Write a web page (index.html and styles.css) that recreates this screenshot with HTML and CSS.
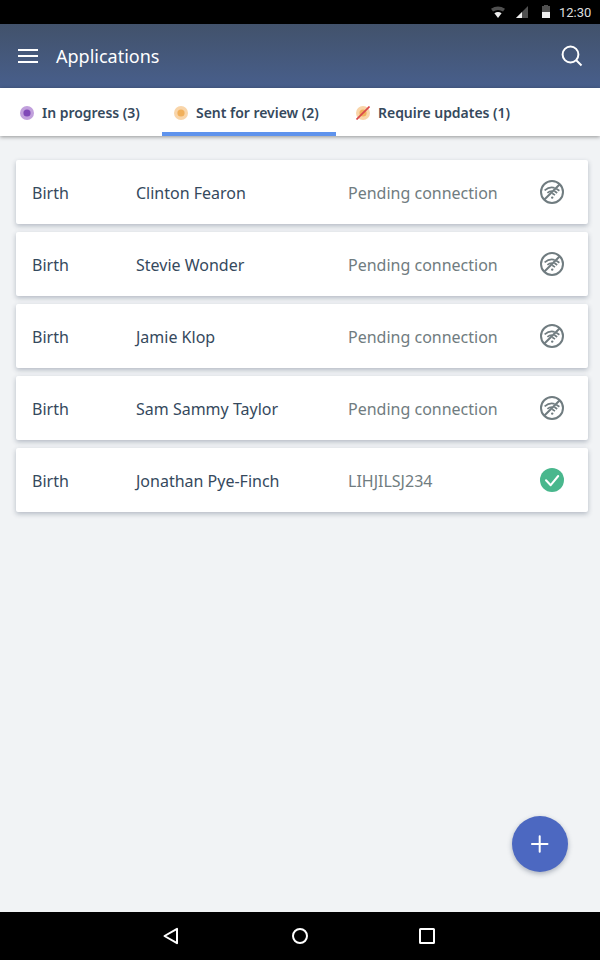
FILE: index.html
```html
<!DOCTYPE html>
<html lang="en">
<head>
<meta charset="utf-8">
<title>Applications</title>
<link rel="stylesheet" href="styles.css">
</head>
<body>
<svg width="0" height="0" class="defs">
  <symbol id="offline" viewBox="0 0 24 24">
    <g fill="none" stroke="#707c80" stroke-width="2">
      <circle cx="12" cy="12" r="11"/>
      <path d="M4.2 19.8L19.8 4.2"/>
    </g>
    <path d="M4.6 10.4Q9.6 6.2 14.6 7.9M7.4 12.9Q9.5 11.1 12 11M16.4 8.8l3 2M14.4 11l2.8 2M12.2 13.2l2.8 1.9" fill="none" stroke="#707c80" stroke-width="1.7"/>
    <circle cx="12.2" cy="17.6" r="1.2" fill="#707c80"/>
  </symbol>
</svg>
<div class="screen">
  <div class="status">
    <svg width="14" height="12" viewBox="0 0 14 12"><path d="M0 2.8Q7-1.8 14 2.8L12 5.5Q7 2.4 2 5.5z" fill="#505050"/><path d="M3.4 7.2Q7 4.8 10.6 7.2L7 12z" fill="#eee"/></svg>
    <svg class="signal" width="12" height="12" viewBox="0 0 12 12"><path d="M12 0v12H0z" fill="#505050"/><path d="M6 6v6H0z" fill="#eee"/></svg>
    <svg class="battery" width="8" height="13" viewBox="0 0 8 13"><path d="M2 0h4v1h2v6H0V1h2z" fill="#505050"/><path d="M0 7h8v6H0z" fill="#eee"/></svg>
    <span class="clock">12:30</span>
  </div>
  <header class="header">
    <svg width="20" height="14" viewBox="0 0 20 14"><path d="M0 1h20M0 7h20M0 13h20" stroke="#fff" stroke-width="2"/></svg>
    <h1 class="title">Applications</h1>
    <svg class="search" width="22" height="22" viewBox="0 0 22 22" fill="none" stroke="#fff" stroke-width="2"><circle cx="9.5" cy="9.5" r="7.9"/><path d="M15 15l5.5 5.5"/></svg>
  </header>
  <nav class="tabs">
    <div class="tab first"><svg width="14" height="14" viewBox="0 0 14 14"><circle cx="7" cy="7" r="7" fill="#c1a0dc"/><circle cx="7" cy="7" r="3.6" fill="#8049b7"/></svg><span>In progress (3)</span></div>
    <div class="tab active"><svg width="14" height="14" viewBox="0 0 14 14"><circle cx="7" cy="7" r="7" fill="#f9d5a9"/><circle cx="7" cy="7" r="3.6" fill="#f1b05b"/></svg><span>Sent for review (2)</span></div>
    <div class="tab last"><svg width="14" height="14" viewBox="0 0 14 14"><circle cx="7" cy="7" r="7" fill="#f9d5a9"/><circle cx="7" cy="7" r="3.6" fill="#f1b05b"/><path d="M.5 13.5l13-13" stroke="#d9484c" stroke-width="1.7"/></svg><span>Require updates (1)</span></div>
  </nav>
  <main class="list">
    <div class="card"><span>Birth</span><span>Clinton Fearon</span><span class="muted">Pending connection</span><svg width="24" height="24"><use href="#offline"/></svg></div>
    <div class="card"><span>Birth</span><span>Stevie Wonder</span><span class="muted">Pending connection</span><svg width="24" height="24"><use href="#offline"/></svg></div>
    <div class="card"><span>Birth</span><span>Jamie Klop</span><span class="muted">Pending connection</span><svg width="24" height="24"><use href="#offline"/></svg></div>
    <div class="card"><span>Birth</span><span>Sam Sammy Taylor</span><span class="muted">Pending connection</span><svg width="24" height="24"><use href="#offline"/></svg></div>
    <div class="card"><span>Birth</span><span>Jonathan Pye-Finch</span><span class="muted">LIHJILSJ234</span><svg width="24" height="24" viewBox="0 0 24 24"><circle cx="12" cy="12" r="12" fill="#49b78d"/><path d="M6 12.2l4.7 5L18.2 8" fill="none" stroke="#fff" stroke-width="2" stroke-linecap="round" stroke-linejoin="round"/></svg></div>
  </main>
  <div class="fab"><svg width="18" height="18" viewBox="0 0 18 18"><path d="M8.7 1.2v15.6M.9 9h15.6" stroke="#fff" stroke-width="2" stroke-linecap="round"/></svg></div>
  <footer class="navbar">
    <svg width="16" height="18" viewBox="0 0 16 18"><path d="M14 1.8v14.4L1.5 9z"/></svg>
    <svg class="home" width="16" height="16" viewBox="0 0 16 16"><circle cx="8" cy="8" r="7"/></svg>
    <svg width="16" height="16" viewBox="0 0 16 16"><rect x="1" y="1" width="14" height="14" rx=".5"/></svg>
  </footer>
</div>
</body>
</html>
```

FILE: styles.css
```css
* { box-sizing: border-box; }
body { margin: 0; font-family: "Noto Sans", sans-serif; color: #35495d; }
svg { display: block; flex: none; }
.defs { position: absolute; }
.screen {
  position: relative;
  width: 600px;
  height: 960px;
  display: flex;
  flex-direction: column;
  background: #f1f3f5;
  overflow: hidden;
}
.status {
  height: 24px;
  background: #000;
  display: flex;
  align-items: center;
  justify-content: flex-end;
  padding-right: 8px;
}
.signal { margin-left: 11px; }
.battery { margin-left: 14px; margin-top: -1px; }
.clock {
  width: 33px;
  margin-left: 9px;
  padding-top: 2px;
  font: 13px/22px Roboto, sans-serif;
  color: #dedede;
  white-space: nowrap;
}
.header {
  height: 64px;
  display: flex;
  align-items: center;
  padding: 0 17px 0 18px;
  background: linear-gradient(#42526b, #485f8c);
}
.title {
  margin: 0 0 0 18px;
  font-size: 18px;
  font-weight: 400;
  line-height: 24px;
  color: #fff;
}
.search { margin-left: auto; }
.tabs {
  height: 48px;
  display: flex;
  background: #fff;
  box-shadow: 0 1px 4px rgba(0, 0, 0, .4);
}
.tab {
  display: flex;
  align-items: center;
  gap: 8px;
  padding-top: 2px;
  font-size: 14px;
  font-weight: 600;
  white-space: nowrap;
}
.tab span { padding-bottom: 2px; letter-spacing: -.03px; }
.first { width: 162px; padding-left: 20px; }
.active {
  width: 174px;
  padding: 6px 0 0 12px;
  border-bottom: 4px solid #5e93ed;
}
.last { padding-left: 20px; }
.list {
  flex: 1;
  display: flex;
  flex-direction: column;
  gap: 8px;
  padding: 24px 12px 0 16px;
}
.card {
  height: 64px;
  display: grid;
  grid-template-columns: 104px 212px 192px 24px;
  align-items: center;
  padding-left: 16px;
  background: #fff;
  border-radius: 2px;
  box-shadow: 0 2px 5px rgba(53, 67, 93, .32);
  font-size: 16px;
  line-height: 22px;
}
.card span { padding-top: 2px; }
.card .muted { color: #707c80; }
.fab {
  position: absolute;
  left: 512px;
  top: 816px;
  width: 56px;
  height: 56px;
  display: grid;
  place-items: center;
  border-radius: 50%;
  background: #4c68c1;
  box-shadow: 0 2px 5px rgba(53, 67, 93, .38);
}
.navbar {
  height: 48px;
  display: flex;
  align-items: center;
  padding-left: 163px;
  background: #000;
}
.navbar svg { fill: none; stroke: #fff; stroke-width: 2; stroke-linejoin: round; }
.navbar .home { margin: 0 111px 0 113px; }
```
